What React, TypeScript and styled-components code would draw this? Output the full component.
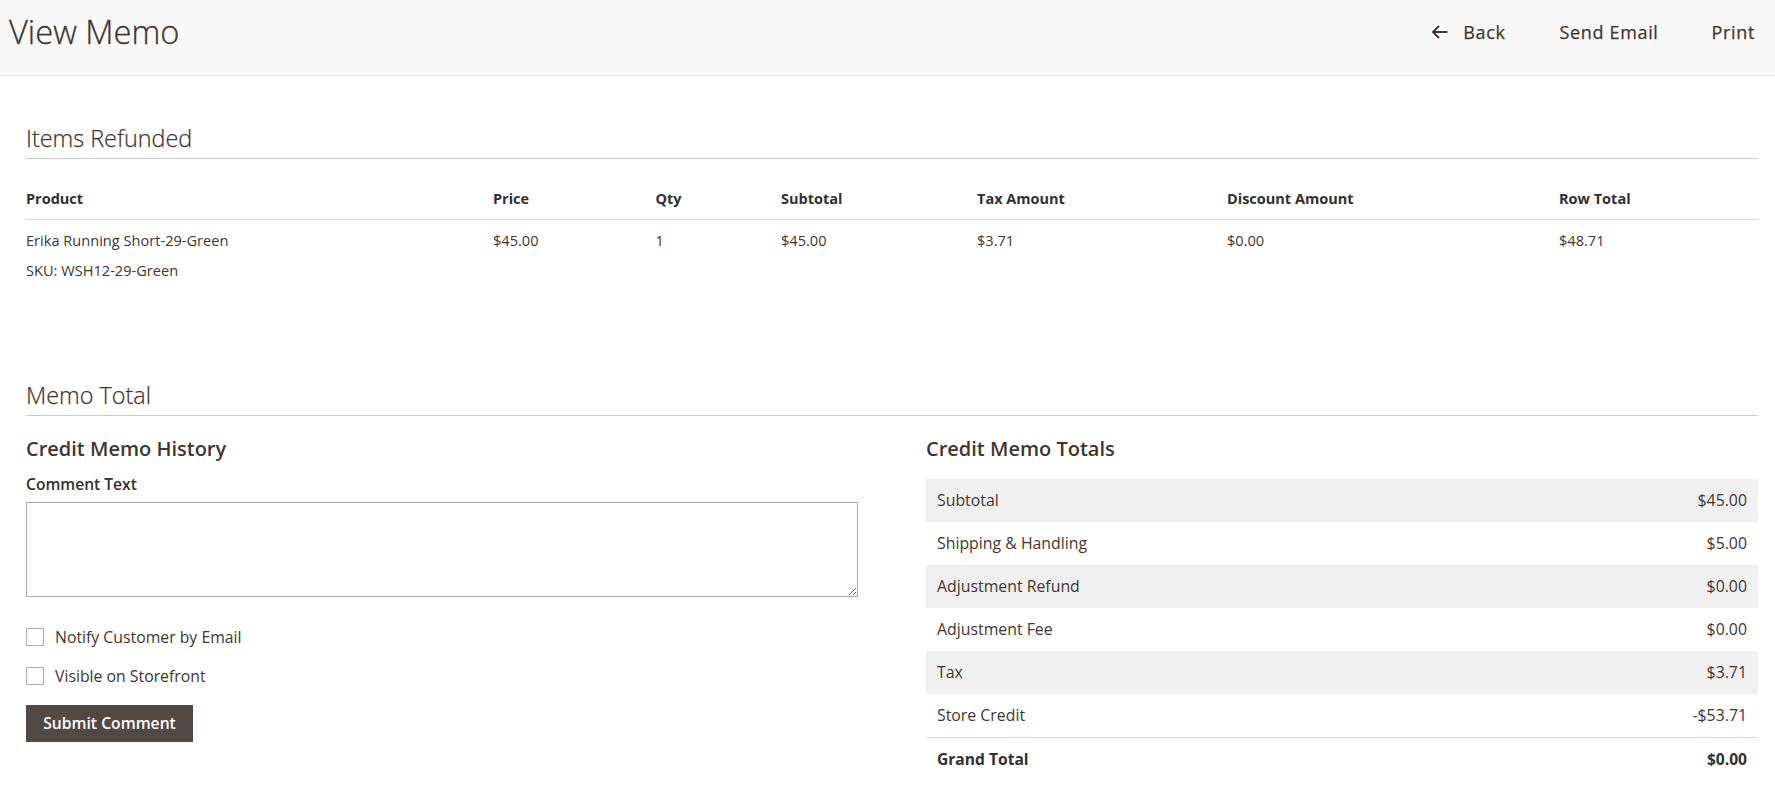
import React from "react";
import styled, { createGlobalStyle } from "styled-components";

const Global = createGlobalStyle`
  html, body { margin: 0; padding: 0; background: #fff; }
  body { font-family: "Open Sans", "Noto Sans", sans-serif; color: #41362f; }
  * { box-sizing: border-box; }
`;

const Header = styled.header`
  height: 76px;
  background: #f8f8f8;
  border-bottom: 1px solid #e4e4e4;
  display: flex;
  align-items: flex-start;
  justify-content: space-between;
  padding: 0 20px 0 9px;
`;
const Title = styled.h1`
  margin: 9px 0 0;
  font-size: 32.7px;
  line-height: 46px;
  font-weight: 300;
  -webkit-text-stroke: 0.3px #41362f;
  color: #41362f;
`;
const Actions = styled.nav`
  display: flex;
  margin-top: 19px;
`;
const Action = styled.a<{ $gap: number }>`
  display: flex;
  align-items: center;
  height: 26px;
  margin-left: ${(p) => p.$gap}px;
  font-size: 18px;
  font-weight: 400;
  line-height: 26px;
  letter-spacing: 0.65px;
  -webkit-text-stroke: 0.25px #41362f;
  color: #41362f;
`;
const BackIcon = styled.svg`
  width: 18px;
  height: 16px;
  margin-right: 14px;
`;
const Main = styled.main`
  padding: 0 17px 0 26px;
`;
const SectionTitle = styled.h2<{ $top: number }>`
  margin: ${(p) => p.$top}px 0 0;
  height: 43px;
  padding-top: 6px;
  font-size: 23.4px;
  line-height: 33px;
  font-weight: 300;
  -webkit-text-stroke: 0.25px #41362f;
  color: #41362f;
  border-bottom: 1px solid #ccc;
`;
const Table = styled.table`
  width: 100%;
  table-layout: fixed;
  border-collapse: collapse;
  margin-top: 20px;
  font-size: 14.6px;
`;
const Th = styled.th`
  height: 40px;
  padding: 1px 0 1px;
  text-align: left;
  font-size: 14.5px;
  font-weight: 700;
  line-height: 20px;
  color: #303030;
  border-bottom: 1px solid #ddd;
`;
const Td = styled.td`
  padding: 10px 0 0;
  vertical-align: top;
  font-weight: 400;
  line-height: 20px;
  color: #41362f;
`;
const Sku = styled.div`
  margin-top: 10px;
`;
const Columns = styled.div`
  display: flex;
  justify-content: space-between;
`;
const History = styled.section`
  width: 832px;
`;
const Totals = styled.section`
  width: 832px;
`;
const SubTitle = styled.h3`
  margin: 19px 0 0;
  font-size: 20px;
  line-height: 28px;
  font-weight: 600;
  color: #41362f;
`;
const FieldLabel = styled.label`
  display: block;
  margin-top: 10px;
  font-size: 15.6px;
  line-height: 22px;
  font-weight: 600;
  color: #303030;
`;
const Comment = styled.textarea`
  display: block;
  width: 832px;
  height: 95px;
  margin: 7px 0 30px;
  border: 1px solid #a9a9a9;
  background: #fff;
  outline: none;
`;
const CheckRow = styled.label`
  display: flex;
  align-items: center;
  height: 20px;
  margin-bottom: 19px;
  font-size: 15.8px;
  line-height: 20px;
  color: #41362f;
`;
const CheckBox = styled.input.attrs({ type: "checkbox" })`
  appearance: none;
  width: 18px;
  height: 18px;
  margin: 0 11px 0 0;
  background: #fff;
  border: 1px solid #adadad;
`;
const SubmitButton = styled.button`
  display: block;
  width: 167px;
  height: 37px;
  margin-top: 4px;
  padding: 0;
  border: none;
  background: #514943;
  color: #fff;
  font-family: inherit;
  font-size: 15.7px;
  font-weight: 600;
  line-height: 37px;
`;
const TotalsList = styled.div`
  margin-top: 16px;
`;
const TotalRow = styled.div<{ $striped?: boolean; $grand?: boolean }>`
  display: flex;
  justify-content: space-between;
  align-items: center;
  height: ${(p) => (p.$grand ? 44 : 43)}px;
  padding: 0 11px;
  font-size: ${(p) => (p.$grand ? 15.6 : 15.85)}px;
  font-weight: ${(p) => (p.$grand ? 700 : 400)};
  color: ${(p) => (p.$grand ? "#303030" : "#41362f")};
  background: ${(p) => (p.$striped ? "#f0f0f0" : "transparent")};
  border-top: ${(p) => (p.$grand ? "1px solid #ddd" : "none")};
`;

const columns = [467, 162.5, 125.5, 196, 250, 332, 199];
const headers = ["Product", "Price", "Qty", "Subtotal", "Tax Amount", "Discount Amount", "Row Total"];
const totals: [string, string][] = [
  ["Subtotal", "$45.00"],
  ["Shipping & Handling", "$5.00"],
  ["Adjustment Refund", "$0.00"],
  ["Adjustment Fee", "$0.00"],
  ["Tax", "$3.71"],
  ["Store Credit", "-$53.71"],
];

export default function App() {
  return (
    <>
      <Global />
      <Header>
        <Title>View Memo</Title>
        <Actions>
          <Action $gap={0}>
            <BackIcon viewBox="0 0 18 16" fill="none" stroke="#41362f" strokeWidth="1.9">
              <path d="M16.5 8H2M8 2 2 8l6 6" />
            </BackIcon>
            Back
          </Action>
          <Action $gap={54}>Send Email</Action>
          <Action $gap={53}>Print</Action>
        </Actions>
      </Header>
      <Main>
        <SectionTitle $top={40}>Items Refunded</SectionTitle>
        <Table>
          <colgroup>
            {columns.map((w, i) => (
              <col key={i} width={w} />
            ))}
          </colgroup>
          <thead>
            <tr>
              {headers.map((h) => (
                <Th key={h}>{h}</Th>
              ))}
            </tr>
          </thead>
          <tbody>
            <tr>
              <Td>
                Erika Running Short-29-Green
                <Sku>SKU: WSH12-29-Green</Sku>
              </Td>
              <Td>$45.00</Td>
              <Td>1</Td>
              <Td>$45.00</Td>
              <Td>$3.71</Td>
              <Td>$0.00</Td>
              <Td>$48.71</Td>
            </tr>
          </tbody>
        </Table>
        <SectionTitle $top={93}>Memo Total</SectionTitle>
        <Columns>
          <History>
            <SubTitle>Credit Memo History</SubTitle>
            <FieldLabel htmlFor="comment">Comment Text</FieldLabel>
            <Comment id="comment" />
            <CheckRow>
              <CheckBox />
              Notify Customer by Email
            </CheckRow>
            <CheckRow>
              <CheckBox />
              Visible on Storefront
            </CheckRow>
            <SubmitButton>Submit Comment</SubmitButton>
          </History>
          <Totals>
            <SubTitle>Credit Memo Totals</SubTitle>
            <TotalsList>
              {totals.map(([label, value], i) => (
                <TotalRow key={label} $striped={i % 2 === 0}>
                  <span>{label}</span>
                  <span>{value}</span>
                </TotalRow>
              ))}
              <TotalRow $grand>
                <span>Grand Total</span>
                <span>$0.00</span>
              </TotalRow>
            </TotalsList>
          </Totals>
        </Columns>
      </Main>
    </>
  );
}
